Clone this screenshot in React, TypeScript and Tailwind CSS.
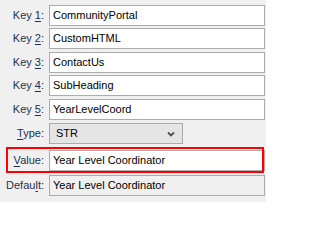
import { ReactNode } from "react";

const font = { fontFamily: '"Liberation Sans", Arial, sans-serif' };

function Label({ children }: { children: ReactNode }) {
  return (
    <div className="w-[44px] shrink-0 text-right text-[11px] leading-none text-[#1e3250]">
      {children}
    </div>
  );
}

function U({ children }: { children: ReactNode }) {
  return <span className="underline underline-offset-2">{children}</span>;
}

function TextBox({ value, disabled }: { value: string; disabled?: boolean }) {
  return (
    <div
      className={`flex h-[21px] flex-1 items-center border border-[#acacac] pl-[3px] text-[11px] text-black ${
        disabled ? "bg-[#f0f0f0]" : "bg-white"
      }`}
    >
      {value}
    </div>
  );
}

function Row({ label, children, className = "" }: { label: ReactNode; children: ReactNode; className?: string }) {
  return (
    <div className={`flex items-center gap-[5px] pr-[1px] ${className}`}>
      <Label>{label}</Label>
      {children}
    </div>
  );
}

export default function App() {
  const keys = ["CommunityPortal", "CustomHTML", "ContactUs", "SubHeading", "YearLevelCoord"];
  const gaps = ["mt-0", "mt-[2px]", "mt-[3px]", "mt-[2px]", "mt-[3px]"];

  return (
    <div className="h-[202px] w-[266px] overflow-hidden bg-[#f0f0f0] pt-[5px]" style={font}>
      {keys.map((k, i) => (
        <Row
          key={k}
          className={gaps[i]}
          label={
            <>
              Key <U>{i + 1}</U>:
            </>
          }
        >
          <TextBox value={k} />
        </Row>
      ))}

      <Row
        className="mt-[3px]"
        label={
          <>
            <U>T</U>ype:
          </>
        }
      >
        <div className="flex h-[21px] w-[134px] items-center justify-between border border-[#acacac] bg-[#e5e5e5] pl-[6px] pr-[6px] text-[11px] text-black">
          <span>STR</span>
          <svg width="8" height="6" viewBox="0 0 8 6" className="mr-[1px]">
            <path d="M1 1.5 L4 4.5 L7 1.5" fill="none" stroke="#505050" strokeWidth="1.8" />
          </svg>
        </div>
      </Row>

      <div className="relative mt-[6px]">
        <Row
          label={
            <>
              <U>V</U>alue:
            </>
          }
        >
          <TextBox value="Year Level Coordinator" />
        </Row>
        <div className="pointer-events-none absolute left-[6px] top-[-3px] h-[26px] w-[258px] border-2 border-[#ff0000]" />
      </div>

      <Row
        className="mt-[4px]"
        label={
          <>
            Defau<U>l</U>t:
          </>
        }
      >
        <TextBox value="Year Level Coordinator" disabled />
      </Row>
    </div>
  );
}
